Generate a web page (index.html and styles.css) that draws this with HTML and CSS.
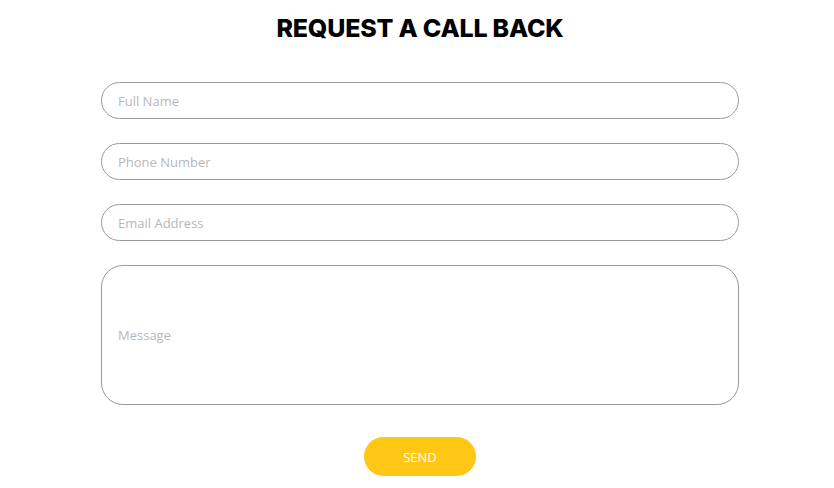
FILE: index.html
```html
<!DOCTYPE html>
<html>
<head>
<meta charset="utf-8">
<link rel="stylesheet" href="styles.css">
</head>
<body>
<main class="page">
  <h1 class="title">REQUEST A CALL BACK</h1>
  <form class="form">
    <input class="field" type="text" placeholder="Full Name">
    <input class="field" type="text" placeholder="Phone Number">
    <input class="field" type="text" placeholder="Email Address">
    <div class="field message"><span class="ph">Message</span></div>
    <div class="actions"><button class="send" type="button">SEND</button></div>
  </form>
</main>
</body>
</html>
```
FILE: styles.css
```css
html, body {
  margin: 0;
  background: #fff;
}
.page {
  padding: 0 95px 0 101px;
  font-family: "Open Sans", sans-serif;
}
.title {
  margin: 0;
  padding-top: 11px;
  height: 82px;
  box-sizing: border-box;
  text-align: center;
  font-family: "Inter", sans-serif;
  font-weight: 800;
  font-size: 25px;
  line-height: 34px;
  color: #000;
  letter-spacing: -0.2px;
}
.form {
  display: flex;
  flex-direction: column;
  gap: 24px;
}
.field {
  box-sizing: border-box;
  width: 100%;
  height: 37px;
  border: 1px solid #999;
  border-radius: 19px;
  padding: 0 16px;
  font-family: "Open Sans", sans-serif;
  font-size: 13px;
  color: #555;
  background: #fff;
  outline: none;
}
.field::placeholder {
  color: #b8b8b8;
}
.message {
  height: 140px;
  border-radius: 22px;
  display: flex;
  align-items: center;
}
.ph {
  color: #b8b8b8;
}
.actions {
  display: flex;
  justify-content: center;
  padding-top: 8px;
}
.send {
  width: 112px;
  height: 39px;
  border: none;
  border-radius: 20px;
  background: #fdc713;
  color: #fff;
  font-family: "Open Sans", sans-serif;
  font-size: 13px;
  cursor: pointer;
}
```
